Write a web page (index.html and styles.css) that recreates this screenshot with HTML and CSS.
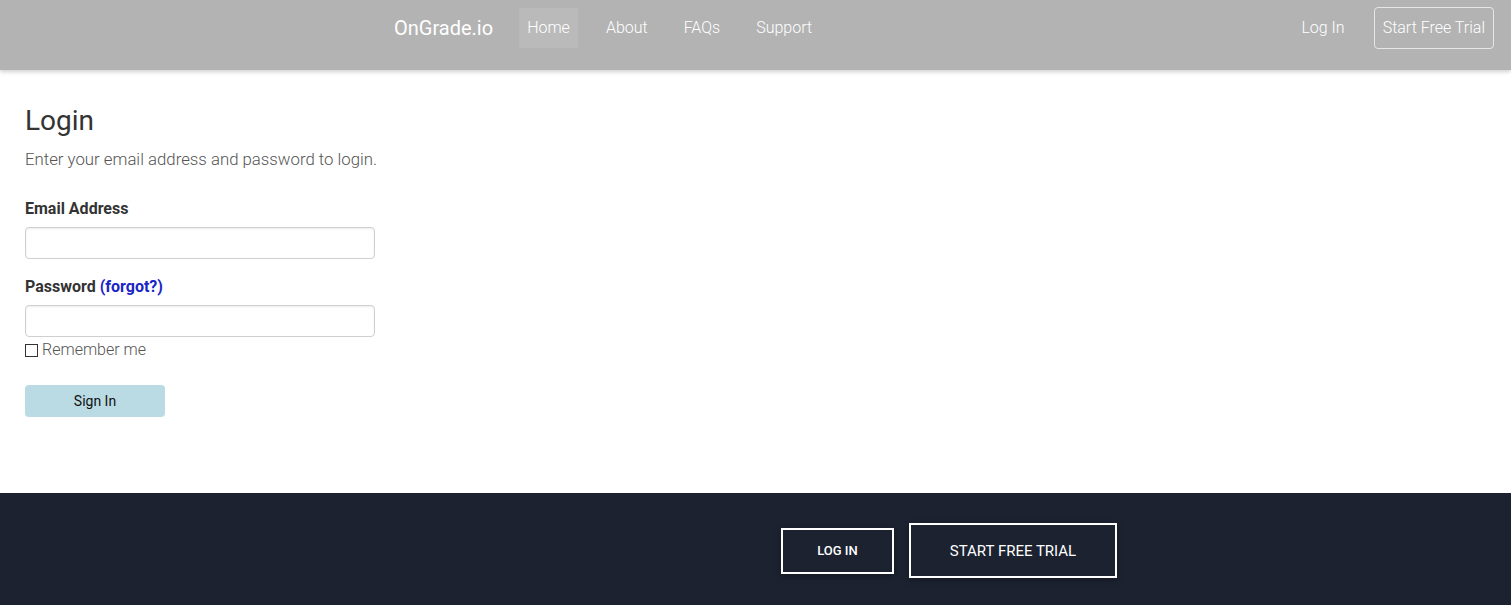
FILE: index.html
```html
<!DOCTYPE html>
<html lang="en">

<head>
    <meta charset="UTF-8">
    <meta name="viewport" content="width=device-width, initial-scale=1.0">
    <title>OnGrade.io - Login</title>
    <link rel="stylesheet" href="styles.css">
</head>

<body>
    <header class="header">
        <section class="header-content">
            <a class="brand" href="#">OnGrade.io</a>
            <nav class="menu">
                <a class="active" href="#">Home</a>
                <a href="#">About</a>
                <a href="#">FAQs</a>
                <a href="#">Support</a>
            </nav>
            <nav class="menu-right">
                <a href="#">Log In</a>
                <a class="btn-outline" href="#">Start Free Trial</a>
            </nav>
        </section>
    </header>
    <main class="login">
        <h1>Login</h1>
        <p class="lead">Enter your email address and password to login.</p>
        <form class="login-form">
            <label for="email">Email Address</label>
            <input type="email" id="email">
            <label for="password">Password <a href="#">(forgot?)</a></label>
            <input type="password" id="password">
            <div class="remember">
                <span class="check"></span>
                <span>Remember me</span>
            </div>
            <button type="button" class="btn-signin">Sign In</button>
        </form>
    </main>
    <footer class="footer">
        <div></div>
        <div class="footer-actions">
            <a class="btn-footer small" href="#">LOG IN</a>
            <a class="btn-footer large" href="#">START FREE TRIAL</a>
        </div>
    </footer>
</body>

</html>
```

FILE: styles.css
```css
html {
    box-sizing: border-box;
    font-family: Roboto, "Liberation Sans", sans-serif;
    font-size: 16px;
}

*,
*::before,
*::after {
    box-sizing: inherit;
}

body {
    margin: 0;
    min-height: 100vh;
    display: flex;
    flex-direction: column;
    color: #333;
}

a {
    text-decoration: none;
}

.header {
    height: 70px;
    background-color: #b3b3b3;
    box-shadow: 0 2px 4px rgba(0, 0, 0, .18);
    position: relative;
    z-index: 1;
}

.header-content {
    display: flex;
    align-items: center;
    padding: 7px 17px 0 394px;
}

.brand {
    color: #fff;
    font-size: 20px;
    margin-right: 26px;
}

.menu {
    display: flex;
    gap: 20px;
}

.menu a,
.menu-right a {
    color: #fff;
    font-weight: 300;
    line-height: 40px;
    padding: 0 8px;
}

.menu a.active {
    background-color: #bababa;
}

.menu-right {
    display: flex;
    align-items: center;
    gap: 21px;
    margin-left: auto;
}

.menu-right .btn-outline {
    border: 1px solid #e6e6e6;
    border-radius: 4px;
    line-height: 40px;
    padding: 0 8px;
}

.login {
    flex-grow: 1;
    padding: 31px 25px 76px;
}

.login h1 {
    margin: 0;
    font-size: 28px;
    font-weight: 400;
    line-height: 40px;
}

.lead {
    margin: 8px 0 0;
    font-size: 16.8px;
    font-weight: 300;
    color: #555;
    line-height: 20px;
}

.login-form {
    display: flex;
    flex-direction: column;
    align-items: flex-start;
    margin-top: 30px;
}

.login-form label {
    font-size: 16px;
    font-weight: 700;
    line-height: 20px;
}

.login-form label a {
    color: #1a25c6;
}

.login-form input {
    width: 350px;
    height: 32px;
    margin: 8px 0 0;
    border: 1px solid #cfcfcf;
    border-radius: 4px;
    box-shadow: inset 0 1px 2px rgba(0, 0, 0, .08);
}

.login-form input + label {
    margin-top: 18px;
}

.remember {
    display: flex;
    align-items: center;
    gap: 4px;
    margin-top: 4px;
    font-weight: 300;
    color: #555;
    line-height: 18px;
}

.check {
    width: 13px;
    height: 13px;
    border: 1px solid #333;
}

.btn-signin {
    margin-top: 26px;
    width: 140px;
    height: 32px;
    border: 0;
    border-radius: 4px;
    background-color: #badbe4;
    color: #111;
    font-family: inherit;
    font-size: 14px;
}

.footer {
    background-color: #1c2230;
    height: 112px;
    display: grid;
    grid-template-columns: 755px 1fr;
}

.footer-actions {
    display: flex;
    align-items: center;
    gap: 15px;
    padding: 0 0 0 26px;
    height: 115px;
}

.btn-footer {
    display: flex;
    align-items: center;
    justify-content: center;
    color: #fff;
    border: 2px solid #fff;
    box-shadow: 0 2px 6px rgba(0, 0, 0, .3);
}

.btn-footer.small {
    width: 113px;
    height: 46px;
    font-size: 13px;
    font-weight: 500;
}

.btn-footer.large {
    width: 208px;
    height: 55px;
    font-size: 15px;
}
```
